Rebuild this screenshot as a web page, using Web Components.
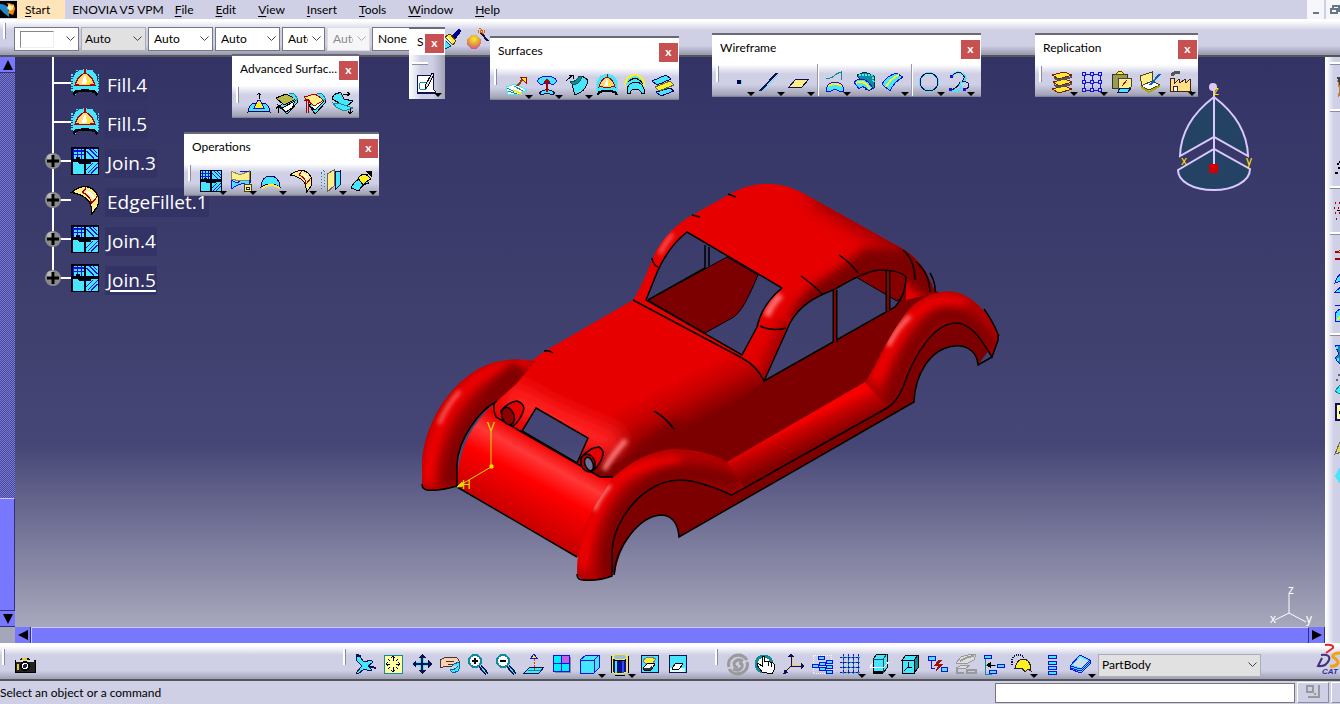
<!DOCTYPE html>
<html lang="en">
<head>
<meta charset="utf-8">
<title>Part Design</title>
<style>
html,body{margin:0;height:100%;overflow:hidden}
body{font:12px/16px Lato,"Open Sans",sans-serif;color:#000;background:#cfcfe6}
</style>
</head>
<body>
<cad-app></cad-app>
<script>
const RESET = '*{box-sizing:border-box}button,select,input{font:inherit;color:inherit;margin:0;border-radius:0}';
function define(name, css, html, init) {
  customElements.define(name, class extends HTMLElement {
    constructor() { super(); this.attachShadow({ mode: 'open' }); }
    connectedCallback() {
      if (this.shadowRoot.childNodes.length) return;
      const t = document.createElement('template');
      t.innerHTML = '<style>' + RESET + css + '</style>' + (typeof html === 'function' ? html(this) : html);
      this.shadowRoot.append(t.content.cloneNode(true));
      if (init) init(this);
    }
  });
}

/* icon drawings, all on a 24 unit square */
const C = '#46e6ff', Y = '#ffee88', N = '#101050', B = '#1010e0', T = '#108c98';
const box = (x, y, w, h, c) => `<rect x="${x}" y="${y}" width="${w || 6}" height="${h || 3}" fill="${C}" stroke="${c || B}"/>`;
const fill = `<path d="M2 21V10Q3 2 11 1h2q9 1 9 9v11l-3-1Q12 17 5 20l-1 3z" fill="${C}"/><path d="M1.500 5v13M22.500 5v13M5 2h14" stroke="${C}" stroke-dasharray="1 1" fill="none"/><path d="M4 14Q6 6 12 4q6 2 8 10-3-1-4 0H8q-2-1-4 0z" fill="#ffd878" stroke="#a00"/><path d="M9 13l3-8 2 8z" fill="#fff"/><path d="M14 7l2 6h-3z" fill="#fe0"/><path d="M12 1v3" stroke="#a00"/><path d="M3 22l1-3Q12 17 20 19l2 3" fill="none" stroke="#000" stroke-width="2"/>`;
const ICONS = {
  fill,
  join: `<path d="M1 1h22v22H1z" fill="#001"/><path d="M2 2h9v8H8V9H5v1H2zM13 2h9v8h-9zM2 13h4l1 1h4v8H2zM13 14h4v-1h5v9h-9z" fill="${C}"/><path d="M3 2v8M6 2v7M9 2v8M2 4h9M2 7h9M15 2l7 7M18 2l4 4M13 4l6 6M14 22l8-8M17 22l5-5M13 19l5-5" stroke="${B}" fill="none"/>`,
  fillet: `<path d="M1 6Q6 2 12 1q7 1 10 7 2 4 0 9l-5 7q1-7-2-11-5-6-14-7z" fill="${Y}" stroke="#000"/><path d="M13 2l-3 4q7 3 7 9l5-6" stroke="#a00" fill="none"/><path d="M13 5q5 2 6 6" stroke="#fff" stroke-width="2" fill="none"/>`,
  bump: `<path d="M1 21q1-8 7-9h8q6 1 7 9l-6-1H7z" fill="${C}" stroke="#006"/><path d="M7 17l4-8h2l4 8z" fill="#fe2" stroke="${B}"/><path d="M12 8V2M10 4l2-2 2 2" stroke="#000" fill="none"/>`,
  wrap: `<path d="M9 12l13-5 1 4-11 12-8-8z" fill="${C}" stroke="#000"/><path d="M2 13l5 4 13-7-3 7-6 4z" fill="#fff" stroke="#000"/><path d="M1 7l10-4 10 5-12 6z" fill="#b8b84a" stroke="#000"/><path d="M14 3q4-2 5 0l4 5-2 1" fill="${C}" stroke="${T}"/><path d="M3 15v7M1 18l2-3 3 3" stroke="#000" fill="none"/>`,
  wrap2: `<path d="M9 12l13-5 1 4-11 12-6-9z" fill="${C}" stroke="#000"/><path d="M8 16l4 3 9-9" fill="#fff" stroke="#000"/><path d="M1 6l11-3 9 6-10 6z" fill="${Y}" stroke="#a00"/><path d="M14 3q4-2 5 0l4 5-2 1" fill="${C}" stroke="${T}"/><path d="M3 9v13M5 9v13M1 10l3-2 3 2" stroke="#a00" fill="none"/>`,
  shape: `<path d="M1 8q2-7 9-6l3 6 9 2-6 5-6-2z" fill="${C}" stroke="#000"/><path d="M2 12l8 1 12 4-9 3-8-4z" fill="${C}" stroke="${T}"/><path d="M12 3h7M16 1l3 2-3 2M19 17v6M17 20l2 3 3-3" stroke="#000" fill="none"/>`,
  trimc: `<path d="M2 11l6 3 6-4 6 1v6l-6-3-7 3-5 3z" fill="${C}" stroke="${B}"/><path d="M2 2l9 4 9-4v9l-9 1-9-2z" fill="${Y}" stroke="#886"/><path d="M11 3l9-1" stroke="${B}"/><rect x="15" y="15" width="7" height="7" fill="${Y}" stroke="#442"/><path d="M21 2v12M17 18h3v2h-3z" stroke="#222" fill="#fff"/>`,
  arc: `<path d="M2 18Q3 7 11 7q9 0 10 11-4-3-9-3t-10 3z" fill="${C}" stroke="#006"/><path d="M3 19q9-6 18 0" stroke="#fe2" stroke-width="2" fill="none"/>`,
  translate: `<path d="M16 3l5-1v14l-5 5z" fill="${C}" stroke="${N}"/><path d="M8 5l7-4v16l-7 6z" fill="${Y}" stroke="#665"/><path d="M2 4v16M5 2v17M2 4l4-3" stroke="${T}" stroke-dasharray="1 2" fill="none"/>`,
  extrap: `<path d="M2 19Q6 10 14 9l6 5q-7 1-10 8z" fill="${C}" stroke="#000"/><path d="M9 9q3-4 8-4l5 5q-5 2-8 6z" fill="#fe2" stroke="#000"/><path d="M17 7l5-5M17 2h5v5z" stroke="#000"/>`,
  extrude: `<path d="M1 14l9-3 12 6-9 4-10 1z" fill="#fff" stroke="${C}"/><path d="M2 15l8 4M3 18l9 3M9 13l9 5" stroke="${T}"/><path d="M8 17l9 4" stroke="#fe2" stroke-width="2"/><path d="M12 13l7-8" stroke="#840" stroke-width="2"/><path d="M15 4h6v6z" fill="#fe2" stroke="#a00"/>`,
  revolve: `<path d="M2 8Q5 3 12 3t10 5l-4 4q-6-4-12 0z" fill="${C}" stroke="${B}"/><path d="M4 20q8-7 16 0l-3 2q-5-3-10 0z" fill="${C}" stroke="${N}"/><path d="M12 7v12M9 10l3-3 3 3" stroke="#a00" stroke-width="2" fill="#fe2"/>`,
  offset: `<path d="M7 12q8-2 10-9l6 4q-1 8-7 12l-6 3z" fill="${C}" stroke="#000"/><path d="M5 9q7 0 9-6l3 1q-2 7-9 8z" fill="${T}" stroke="#055"/><path d="M1 8l7-6M4 2h4v4" stroke="#000" fill="none"/>`,
  loft: `<path d="M2 12Q3 3 12 2q9 1 9 11" fill="${C}" stroke="#fe2" stroke-width="2"/><path d="M4 15q3-6 9-6 7 0 9 11l-3 1q-2-5-7-5-4 0-5 5l-3-1z" fill="${C}" stroke="#000"/><path d="M5 9q8-8 15 2" stroke="#000" fill="none"/>`,
  blend: `<path d="M1 8l14-6 5 4-14 6zM5 19l14-4 4 3-13 5z" fill="${C}" stroke="#006"/><path d="M4 14l15-6 4 4-15 6z" fill="#fe2" stroke="#664"/>`,
  sketch: `<path d="M3 4h16v13l3 5H3z" fill="#fff" stroke="${N}"/><path d="M3 22h19" stroke="${N}" stroke-width="2"/><circle cx="9" cy="15" r="4" fill="none" stroke="${T}"/><path d="M11 15l7-13 2 1-6 12-3 3z" fill="#dde" stroke="#000"/>`,
  point: `<rect x="10" y="10" width="4" height="4" fill="#004"/><path d="M14 10v4" stroke="${C}"/>`,
  line: `<path d="M3 21L20 3" stroke="${N}" stroke-width="2"/><path d="M4 22L21 5" stroke="${C}"/>`,
  plane: `<path d="M2 17l7-8h13l-7 8z" fill="${Y}" stroke="${N}"/>`,
  project: `<path d="M3 20q2-8 9-8t9 8l-1 2-4-1q-4-3-8 0l-4 1z" fill="${C}" stroke="${B}"/><path d="M5 16q7-4 14 0" stroke="#fe2" stroke-width="2" fill="none"/><path d="M3 8q5 1 8-2t7-4v8" stroke="${T}" fill="none"/>`,
  intersect: `<path d="M4 5l8-3 9 4v12l-8 2z" fill="${T}" stroke="#033"/><path d="M6 5h13l2 8" fill="none" stroke="${C}" stroke-dasharray="2 1" stroke-width="2"/><path d="M1 12q7-6 14 0l5 6-4 3q-6-7-10-2z" fill="${C}" stroke="${B}"/><path d="M3 13q8-4 14 6" stroke="#fe2" stroke-width="2" fill="none"/>`,
  parallel: `<path d="M1 14Q6 6 15 3l7 4Q13 12 9 21z" fill="${C}" stroke="${B}"/><path d="M5 17Q9 9 18 5" stroke="#fe2" stroke-width="2" fill="none"/>`,
  circle: `<circle cx="12" cy="12" r="9" fill="none" stroke="${C}" stroke-width="2"/><circle cx="12" cy="12" r="9" fill="none" stroke="${N}"/>`,
  spline: `<path d="M5 6q4-5 9-3 8 4 2 9-4 0-3 3 2 3-1 5-4 2-8 0" fill="none" stroke="${C}" stroke-width="2"/><path d="M5 6q4-5 9-3 6 4 1 8M15 11q7 1 7 4t-5 5M13 12q-2 6-9 8" fill="none" stroke="${N}"/><path d="M3 5h3v3H3zM2 18h3v3H2zM16 18h3v3h-3z" fill="${B}"/>`,
  stack: `<path d="M2 5l12-3 8 3-13 4zM3 12l12-3 7 3-13 4zM2 19l12-3 8 3-13 4z" fill="#ffe83c" stroke="#720"/><path d="M4 8l5 2 13-3M4 15l5 2 13-3" stroke="#555" stroke-width="2" fill="none"/>`,
  pattern: `<path d="M4 4h16M4 12h16M4 20h16M4 4v16M12 4v16M20 4v16" stroke="${B}"/><g fill="#ccf" stroke="${B}"><circle cx="4" cy="4" r="2"/><circle cx="12" cy="4" r="2"/><circle cx="20" cy="4" r="2"/><circle cx="4" cy="12" r="2"/><circle cx="12" cy="12" r="2"/><circle cx="20" cy="12" r="2"/><circle cx="4" cy="20" r="2"/><circle cx="12" cy="20" r="2"/><circle cx="20" cy="20" r="2"/></g>`,
  paste: `<path d="M2 4h15v14H2z" fill="#9a9a50" stroke="#333"/><path d="M6 4q4-5 8 0z" fill="#fe2" stroke="#540"/><path d="M8 8h13v9l-8 5-5-3z" fill="${Y}" stroke="#444"/><path d="M12 16l5-6M8 20l12 1" stroke="#a00"/><path d="M10 18h11l-3 4H8z" fill="${C}" stroke="${N}"/>`,
  book: `<path d="M2 6l12-4v9L4 16z" fill="${Y}" stroke="#442"/><path d="M3 16l11-5 8 4-11 5z" fill="#fff" stroke="#442"/><path d="M3 17l8 5 11-6" stroke="#aa0" stroke-width="2" fill="none"/><path d="M12 15l10-11" stroke="#06c" stroke-width="2"/>`,
  factory: `<path d="M2 21V8h4v6l5-5 1 4 5-4 1 4 4-4 1 12z" fill="#ffe08a" stroke="#421"/><path d="M4 6q0-4 8-4" stroke="#555" stroke-width="3" fill="none"/><path d="M5 16h4v5H5z" fill="#fff" stroke="#421"/>`,
  brush: `<path d="M13 9l7-7 2 2-6 8z" fill="#00a" stroke="#006"/><path d="M6 10l5-3 6 7-3 4z" fill="#ffe83c" stroke="#540"/><path d="M5 11l7 8-6 3-4-5z" fill="${C}" stroke="#046"/><path d="M6 12l5 5M8 10l5 6" stroke="#fff"/>`,
  ball: `<defs><radialGradient id="b" cx=".5" cy=".3" r=".8"><stop offset="0" stop-color="#ffe83c"/><stop offset=".5" stop-color="#e0a030"/><stop offset="1" stop-color="#d030d0"/></radialGradient></defs><circle cx="8" cy="15" r="7" fill="url(#b)"/><path d="M15 6l7 8" stroke="${N}" stroke-width="2"/><path d="M12 4h8M14 1l3 6" stroke="#d60" stroke-dasharray="1 1" stroke-width="3"/>`,
  plane3: `<path d="M2 4l4 1 4 5 7-2 2 2-5 4 4 4-2 1-6-2-6 5-2-1 6-7-6-6z" fill="${C}" stroke="${N}"/><path d="M14 14l8 2M2 3l5 1" stroke="${N}" stroke-width="2"/>`,
  fitall: `<rect x="2" y="3" width="18" height="18" fill="#ffffa0" stroke="${T}"/><path d="M11 9V5M9 6l2-2 2 2M11 15v4M9 18l2 2 2-2M8 12H4M6 10l-2 2 2 2M14 12h4M16 10l2 2-2 2M8 9L6 7M14 9l2-2M8 15l-2 2M14 15l2 2" stroke="#000" fill="none"/>`,
  pan: `<path d="M12 3v18M3 12h18" stroke="${C}" stroke-width="4"/><path d="M12 3v18M3 12h18" stroke="${N}" stroke-width="2"/><path d="M12 2l4 4H8zM12 22l4-4H8zM2 12l4-4v8zM22 12l-4-4v8z" fill="${N}"/>`,
  rotate: `<path d="M2 8l6-3h9q5 2 4 6l-5 1-3 3-5-1-6 2z" fill="#fdd0b0" stroke="#433"/><path d="M8 9h8M10 12h6" stroke="#433"/><path d="M14 14q3-4 7-3 2 4-1 8l-5 2-3-3q5 0 8-4" fill="${C}" stroke="#06a"/>`,
  zoomin: `<path d="M14 14l7 8" stroke="${N}" stroke-width="4"/><path d="M14 14l7 8" stroke="${C}"/><circle cx="9" cy="9" r="6" fill="#fff" stroke="${T}" stroke-width="2"/><path d="M6 9h6M9 6v6" stroke="#000" stroke-width="2"/>`,
  zoomout: `<path d="M14 14l7 8" stroke="${N}" stroke-width="4"/><path d="M14 14l7 8" stroke="${C}"/><circle cx="9" cy="9" r="6" fill="#fff" stroke="${T}" stroke-width="2"/><path d="M6 9h6" stroke="#000" stroke-width="2"/>`,
  normal: `<path d="M2 21l6-6h14l-5 6z" fill="${C}" stroke="${N}"/><path d="M6 18h13" stroke="${T}"/><path d="M12 18V4" stroke="#c40" stroke-dasharray="2 1"/><path d="M9 6l3-4 3 4z" fill="#fe2" stroke="${B}"/>`,
  multi: `<path d="M5 5h16v16H5z" fill="#889"/><path d="M3 3h16v16H3z" fill="#00f0ff"/><path d="M11 3h8v8h-8z" fill="#c060e0"/><path d="M3 3h16v16H3zM11 3v16M3 11h16" stroke="${B}" fill="none"/>`,
  cube: `<path d="M2 8l6-5h13v13l-5 5H2z" fill="${C}" stroke="${B}"/><path d="M2 8h14v13M16 8l5-5" fill="none" stroke="${B}"/>`,
  cyl: `<path d="M5 4v17h13V4z" fill="#10108c"/><path d="M7 7v14h2V7z" fill="${C}"/><path d="M14 8h2v13h-2z" fill="#3048ff"/><path d="M4 5v15q7 4 15 0V5" fill="none" stroke="#fe2"/><ellipse cx="12" cy="5" rx="7" ry="3" fill="#9be" stroke="#fe2"/><path d="M3 4v17M20 4v17M6 8q6 2 12 0M7 23h10" stroke="#000" fill="none"/>`,
  hide: `<path d="M3 3h17v17H3z" fill="${C}" stroke="${N}"/><path d="M5 9q2-4 8-4l5 2-3 4-7 1z" fill="#ffe83c" stroke="#777"/><path d="M5 16l5-5 7 1-4 6-6 1z" fill="#fff" stroke="#000"/><path d="M6 17h6l2-2" stroke="#333" stroke-width="2" fill="none"/>`,
  swap: `<path d="M3 3h17v17H3z" fill="${C}" stroke="${N}"/><path d="M4 16h15v4H4z" fill="#dff"/><path d="M6 16l4-5 7 1-4 5-6 1z" fill="#fff" stroke="#000"/>`,
  swirl: `<g fill="none" stroke="#9a9a9a" stroke-width="3" shape-rendering="auto"><path d="M21 8Q16 1 8 4 1 8 3 15"/><path d="M3 17q5 7 13 4 7-4 5-11"/><path d="M17 9q-6-3-9 2 0 5 4 4"/><path d="M7 17q6 3 9-2 1-4-3-4"/></g>`,
  hand: `<circle cx="10" cy="12" r="8" fill="#ffe" stroke="${T}" stroke-width="3"/><path d="M8 20l-5-7 1-2 4 3V5l2-1 1 6 3-1 2 1 3 1 2 2-1 5-2 4z" fill="#fff" stroke="#000"/><path d="M14 10v4M17 11v4" stroke="#000"/>`,
  axis: `<path d="M9 3v11h12M9 14l-6 6" fill="none" stroke="${N}"/><path d="M10 5v8h9M9 15l-4 4" fill="none" stroke="#ec6"/><path d="M9 1l3 4H6zM23 14l-4-3v6zM1 22l5-1-3-4z" fill="${N}"/>`,
  tree1: `<path d="M3 3h18v18H3z" fill="none" stroke="#fff" stroke-dasharray="1 1"/>${box(8,4)}${box(2,12)}${box(9,10)}${box(9,15)}${box(16,8)}${box(16,13)}${box(16,18)}`,
  grid: `<path d="M5 2v20M10 2v20M15 2v20M20 2v20M2 5h20M2 10h20M2 15h20M2 20h20" stroke="${T}"/><path d="M5 2v20M10 2v20M15 2v20M20 2v20M2 5h20M2 10h20M2 15h20M2 20h20" stroke="${B}" stroke-dasharray="2 2"/>`,
  cut: `<path d="M5 7l4-5h10v14l-4 5H5z" fill="${C}" stroke="#000"/><path d="M5 7h10l4-5M15 7v14" stroke="#055" fill="none"/><path d="M2 15h14l5-5h-3M2 15l3-4" fill="none" stroke="#fff"/><path d="M5 20h10" stroke="#000" stroke-width="2"/>`,
  box3: `<path d="M4 8l4-5h12v13l-4 5H4z" fill="${T}" stroke="#000"/><path d="M4 8h12v13H4z" fill="${C}" stroke="#000"/><path d="M4 8l4-5h12l-4 5z" fill="${C}" stroke="#000"/><path d="M6 19l4-4h4M10 15v-5" stroke="#000" fill="none"/>`,
  bolt: `${box(2,4,7,4)}<path d="M5 8v8h4" fill="none" stroke="${B}"/><path d="M12 8l-4 6h4l-3 7 8-9h-4l3-4z" fill="#a01010"/>${box(15,15,6,4)}`,
  rocks: `<path d="M2 11l5-6 10-3h5l-2 6-8 4zM2 16l6-3h8l-5 4z" fill="#ddd" stroke="#999"/><path d="M6 9l8-4 6-1M3 17v4h7M13 18h9v3h-9z" fill="none" stroke="#999" stroke-width="2"/>`,
  tree2: `<path d="M3 7v15h7M3 13h11" fill="none" stroke="${T}"/>${box(2,3,7,3)}<path d="M5 13h8M5 13l3-2v4z" stroke="#000"/>${box(15,12,7,3)}${box(7,18,7,3)}`,
  search: `<path d="M2 10q0-7 8-7l5 3M2 10v4" stroke="${N}" stroke-dasharray="1 1" stroke-width="2" fill="none"/><path d="M5 16Q7 8 12 7q9 0 9 12l-3-2-3 3q-2-4-6-4z" fill="#fe2" stroke="#222"/>`,
  bars: `${box(8,3,8,3)}${box(8,9,8,3)}${box(8,14,8,3)}${box(8,19,8,3)}`,
  rubber: `<path d="M2 14L12 3l10 5v4L13 21 2 17z" fill="${C}" stroke="${B}"/><path d="M4 13L12 5l8 4-7 7z" fill="#cde"/><path d="M2 14l11 3L22 8M2 16l11 3 9-9" fill="none" stroke="${B}"/>`,
  camera: `<path d="M2 8h5l2-2h6l2 2h5v12H2z" fill="#222" stroke="#000"/><path d="M3 8h18v2H3z" fill="#ddd"/><path d="M9 6h5v2H9zM4 12h2v6H4z" fill="#ec2"/><circle cx="12" cy="14" r="4" fill="#fff" stroke="#000" stroke-width="2"/><circle cx="12" cy="14" r="2" fill="#224"/>`,
  a1: `<path d="M3 5h21v10H10l-6 8 1-9z" fill="#c08040"/><path d="M3 2h21v12H7z" fill="#444"/>`,
  a2: `<path d="M3 7h2v2H3zM5 5h3v2H5zM4 11h3v2H4zM1 16h3v2H1z" fill="#000"/>`,
  a3: `<path d="M1 4h23M0 9h24M1 14h23M2 20h22" stroke="#a00" stroke-dasharray="1 3" stroke-width="2"/><path d="M3 11h16" stroke="#000"/>`,
  a4: `<path d="M1 8l22-5v8zM1 15l22-4v8z" fill="#fe6" stroke="#a00"/>`,
  a5: `<path d="M1 13q2-8 8-10h14v7q-14 0-22 3zM1 22l7-6h16v6z" fill="${C}" stroke="${B}"/>`,
  a6: `<path d="M1 4h23M1 20v-6q2-6 7-6h16v12z" fill="${C}" stroke="${B}"/><path d="M3 19L14 9" stroke="#fe2" stroke-width="2"/>`,
  a7: `<path d="M1 4h10l13-2v20H5l-4-5 4-4z" fill="${T}" stroke="${B}"/><path d="M2 6h20M3 18h20" stroke="${C}" stroke-dasharray="2 2" stroke-width="3"/>`,
  a8: `<path d="M4 3h2v2H4zM2 8h2v2H2z" fill="#666"/><path d="M1 20l5-6h18v8H4z" fill="${C}" stroke="${T}"/>`,
  a9: `<path d="M2 4h22v16H2z" fill="#ffffa0" stroke="${N}" stroke-width="2"/><path d="M5 11h10v3H5z" fill="#000"/>`,
  a10: `<path d="M1 21l4-10 3-6h13v14H8z" fill="#dd5" stroke="#666"/>`,
  a11: `<path d="M1 16l4-8 4-2h13v17H5z" fill="${C}"/>`
};
define('cad-icon', ':host{display:block;width:24px;height:24px}svg{display:block;width:100%;height:100%}', el =>
  `<svg viewBox="0 0 24 24" shape-rendering="crispEdges" aria-hidden="true">${ICONS[el.getAttribute('name')]}</svg>`);

define('cad-tool', `:host{display:block;flex:none}
button{display:grid;width:28px;height:28px;padding:0 0 0 2px;border:0;background:none;align-items:start}
:host([menu]) button{width:30px}
cad-icon,i{grid-area:1/1}
cad-icon{margin-top:2px}
i{align-self:end;justify-self:end;width:0;height:0;border:4px solid transparent;border-top-color:#000;border-bottom:0}`,
  el => `<button aria-label="${el.getAttribute('name')}"><cad-icon name="${el.getAttribute('name')}"></cad-icon>${el.hasAttribute('menu') ? '<i></i>' : ''}</button>`);

define('cad-grip', ':host{display:block;flex:none;width:3px;height:16px;background:#fff;border-right:1px solid #8c8ca0}', '');
define('cad-sep', ':host{display:block;flex:none;width:2px;height:32px;margin:0 2px;background:#fff;border-left:1px solid #9a9aac}', '');

define('cad-window', `:host{display:flex;flex-direction:column;position:absolute;height:64px;border-top:2px solid #6a6a76;background:#fff}
header{display:flex;align-items:center;height:26px;padding:0 1px 0 8px;flex:none}
h2{font:inherit;flex:1;margin:0;white-space:nowrap}
header button{width:19px;height:19px;padding:0 0 2px;border:0;background:#c75050;color:#fff;font-weight:700;font-size:12px;line-height:14px;margin-top:3px;flex:none}
.bar{flex:1;display:flex;align-items:end;padding:0 0 1px 4px;background:linear-gradient(#fff 10%,#cfcfe6 36%,#cfcfe6 65%,#a2a2b6 95%,#77778a)}
cad-grip{align-self:start;margin-top:5px;margin-right:6px}
:host([tall]){height:72px}
:host([tall]) .bar{flex-direction:column;align-items:center;padding:7px 0 0;background:linear-gradient(90deg,#fff 0,#cfcfe6 35%,#cfcfe6 65%,#a2a2b6)}
:host([tall]) cad-grip{width:16px;height:3px;align-self:start;margin:0 0 4px 3px;border:0;border-bottom:1px solid #8c8ca0}`,
  el => `<header><h2>${el.getAttribute('heading')}</h2><button aria-label="Close">x</button></header><div class="bar"><cad-grip></cad-grip><slot></slot></div>`);

define('cad-select', `:host{display:grid;flex:none;height:24px}
select{grid-area:1/1;width:100%;min-width:0;height:100%;appearance:none;border:1px solid #767686;background:#fff;padding:0 16px 1px 5px;outline:0;text-overflow:clip}
svg{grid-area:1/1;justify-self:end;align-self:center;width:9px;height:6px;margin-right:4px;pointer-events:none}
:host([gray]) select{background:#e1e1e1;border-color:#adadb4}
:host([gray]) select{padding-left:3px}
:host([off]) select{color:#8a8a8a;background:#f6f6f8;border-color:#ddd;opacity:1}
:host([off]) svg{opacity:.4}
i{grid-area:1/1;width:34px;height:17px;margin-left:6px;align-self:center;border:1px solid #888;border-right-color:#eee;border-bottom-color:#eee;pointer-events:none}`,
  el => `<select aria-label="${el.getAttribute('label')}"${el.hasAttribute('off') ? ' disabled' : ''}><option>${el.getAttribute('value') || ''}</option></select>${el.hasAttribute('swatch') ? '<i></i>' : ''}<svg viewBox="0 0 9 6"><path d="M0.500 0.500l4 4 4-4" fill="none" stroke="#444"/></svg>`);

define('cad-menubar', `:host{display:flex;align-items:stretch;height:19px;overflow:hidden}
.logo{width:17px;flex:none}
nav{display:flex}
nav button{border:0;background:none;padding:0 11px;white-space:nowrap}
nav .on{background:#ffe4b8;padding:0 15px 0 8px}
nav .vpm{padding:0 0 0 7px}
u{text-underline-offset:2px}
.win{margin-left:auto;display:flex;gap:2px;margin-right:-3px}
.win button{width:17px;padding:0;border:0;background:#f7f7fb;display:grid;place-items:center}`,
`<svg class="logo" viewBox="0 0 17 19"><path d="M0 1h17v17H0z" fill="#000"/><path d="M0 4q6 0 8 4t1 9Q3 13 0 9z" fill="#28c"/><path d="M7 3q8 0 8 6l-2 6-5-2 2-4z" fill="#f80"/><path d="M9 4l3 2 2-2-1 5-3 2-3-3z" fill="#fff0b0"/></svg>
<nav><button class="on"><u>S</u>tart</button><button class="vpm">ENOVIA V5 VPM</button><button><u>F</u>ile</button><button><u>E</u>dit</button><button><u>V</u>iew</button><button><u>I</u>nsert</button><button><u>T</u>ools</button><button><u>W</u>indow</button><button><u>H</u>elp</button></nav>
<div class="win"><button aria-label="Minimize"><svg width="10" height="10"><path d="M2 8h6" stroke="#667788" stroke-width="2"/></svg></button><button aria-label="Restore"><svg width="10" height="10"><path d="M3 4V1h6v5H7M1 4h6v4H1z" fill="none" stroke="#667788" stroke-width="2"/></svg></button></div>`);

define('cad-props', `:host{display:flex;align-items:center;height:38px;gap:2px;padding:2px 0 0 3px;overflow:hidden;background:linear-gradient(#fff 0,#fff 5%,#cfcfe6 30%,#cfcfe6 70%,#a2a2b6 90%,#9a9aae 94%,#55555c 95%,#55555c)}
cad-grip{align-self:start;margin:2px 6px 0 0}
cad-tool{margin-left:-3px}`,
`<cad-grip></cad-grip>
<cad-select label="Fill color" swatch style="width:65px"></cad-select>
<cad-select label="Transparency" value="Auto" gray style="width:65px"></cad-select>
<cad-select label="Line width" value="Auto" style="width:65px"></cad-select>
<cad-select label="Line type" value="Auto" style="width:65px"></cad-select>
<cad-select label="Point type" value="Auto" style="width:43px"></cad-select>
<cad-select label="Rendering" value="Auto" off style="width:43px"></cad-select>
<cad-select label="Layer" value="None" style="width:66px"></cad-select>
<cad-tool name="brush"></cad-tool><cad-tool name="ball"></cad-tool>`);

define('cad-scroll', `:host{display:flex;background:#7878ff;min-width:0;min-height:0}
:host([vertical]){flex-direction:column}
button{flex:none;width:16px;height:16px;padding:0;border:0;border-right:1px solid #303080;background:#7878ff;display:grid;place-items:center}
:host([vertical]) button{width:15px;border:0;border-bottom:1px solid #303080}
.track{background:repeating-conic-gradient(#7878dc 0 25%,#484890 0 50%) 0 0/2px 2px}
.thumb{background:#7878ff;border-top:1px solid #c8c8ff;border-right:1px solid #303080;border-left:1px solid #c8c8ff}
:host([vertical]) .thumb{border-left:0;border-bottom:1px solid #303080}`,
  el => {
    const v = el.hasAttribute('vertical');
    const tri = d => `<svg width="12" height="12"><path d="${d}" fill="#000"/></svg>`;
    return `<button aria-label="Back">${tri(v ? 'M1 11L6 1l5 10z' : 'M11 1v10L1 6z')}</button>
<div class="track" style="flex:${el.getAttribute('before')}"></div><div class="thumb" style="flex:${el.getAttribute('size')}"></div>
<button aria-label="Forward">${tri(v ? 'M1 1h10L6 11z' : 'M1 1v10l10-5z')}</button>`;
  });

define('cad-node', `:host{display:grid;grid-template-columns:53px 17px 31px auto;align-items:center;justify-content:start;height:39px;color:#fff}
.stem{grid-area:1/1;align-self:stretch;margin-left:37px;width:2px;background:#fff}
:host([last]) .stem{align-self:start;height:18px}
.h{grid-column:1/3;grid-row:1;margin:-3px 0 0 38px;height:2px;width:18px;background:#fff}
.p{grid-column:1/3;grid-row:1;margin:-3px 0 0 29px;width:18px;height:18px}
cad-icon{grid-column:3;grid-row:1;width:30px;height:30px;margin:-4px 0 0 -15px}
a{grid-column:4;grid-row:1;margin-left:-11px;padding:0 1px 0 2px;height:29px;font:19px/29px "Open Sans","Noto Sans",sans-serif;color:#fff;text-decoration:none;background:#333366;border-radius:2px;white-space:nowrap;margin-top:2px}
:host([last]) a{text-decoration:underline;text-decoration-thickness:2px;text-underline-offset:3px}`,
  el => `<span class="stem"></span><span class="h"></span>${el.hasAttribute('open') ? '' : '<svg class="p" viewBox="0 0 18 18"><circle cx="9" cy="9" r="8" fill="#8a8a8a"/><circle cx="7" cy="6" r="4" fill="#b8b8b8"/><path d="M9 3v12M3 9h12" stroke="#000" stroke-width="3"/></svg>'}<cad-icon name="${el.getAttribute('icon')}"></cad-icon><a href="#"><slot></slot></a>`);

define('cad-car', ':host{display:block;min-width:0;min-height:0}svg{display:block;width:100%;height:100%}text{font:12px "Liberation Sans",sans-serif}', `
<svg viewBox="15 57 1310 570" role="img" aria-label="Car body">
<defs>
<filter id="f2" x="-50%" y="-50%" width="200%" height="200%"><feGaussianBlur stdDeviation="2"/></filter>
<filter id="f5" x="-50%" y="-50%" width="200%" height="200%"><feGaussianBlur stdDeviation="5"/></filter>
<filter id="f9" x="-50%" y="-50%" width="200%" height="200%"><feGaussianBlur stdDeviation="9"/></filter>
<linearGradient id="hood" gradientUnits="userSpaceOnUse" x1="698" y1="368" x2="720" y2="412"><stop offset="0" stop-color="#e60000"/><stop offset=".4" stop-color="#c80000"/><stop offset="1" stop-color="#7d0000"/></linearGradient>
<linearGradient id="front" gradientUnits="userSpaceOnUse" x1="550" y1="446" x2="508" y2="522"><stop offset="0" stop-color="#f00000"/><stop offset=".2" stop-color="#ff3838"/><stop offset=".45" stop-color="#ff0000"/><stop offset=".8" stop-color="#d80000"/><stop offset="1" stop-color="#c00000"/></linearGradient>
<linearGradient id="board" gradientUnits="userSpaceOnUse" x1="796" y1="423" x2="809" y2="450"><stop offset="0" stop-color="#f80000"/><stop offset=".35" stop-color="#c40000"/><stop offset="1" stop-color="#800000"/></linearGradient>
<linearGradient id="pillar" gradientUnits="userSpaceOnUse" x1="757" y1="330" x2="784" y2="342"><stop offset="0" stop-color="#e80000"/><stop offset=".4" stop-color="#e00000"/><stop offset="1" stop-color="#900000"/></linearGradient>
<path id="fl" d="M422 486V463C424 420 455 375 492 363Q512 357 536 361L515 385 497 401C480 410 458 438 457 465V486Q440 492 425 490Z"/>
<path id="fr" d="M577 575C577 540 586 515 613 478Q640 452 673 449 705 449 727 462L745 488 732 495C722 491 700 480 680 480 645 480 613 518 612 553V576Q595 582 582 580Z"/>
<path id="rr" d="M865 382C877 365 886 340 903 317 920 294 940 290 955 292 975 296 992 318 998 334V340L992 357C980 337 970 323 956 323 935 323 915 352 903 387Q897 402 887 408Z"/>
<path id="hd" d="M495 402Q510 375 545 351L633 300 742 358Q757 366 764 381L705 428 650 460 613 477H600L522 432 496 417 492 410Z"/>
<path id="rf" d="M633 300Q641 288 652 260 662 235 687 218L730 194Q770 172 810 197L903 249Q925 262 935 293L906 300V277C898 270 880 270 873 271 855 276 845 284 833 290 815 296 800 305 790 323L764 381Q757 366 742 358L633 300Z"/>
<clipPath id="cfl"><use href="#fl"/></clipPath><clipPath id="cfr"><use href="#fr"/></clipPath><clipPath id="crr"><use href="#rr"/></clipPath><clipPath id="chd"><use href="#hd"/></clipPath><clipPath id="crf"><use href="#rf"/></clipPath>
<mask id="holes" maskUnits="userSpaceOnUse" x="400" y="160" width="620" height="440"><path d="M400 160h620v440H400z" fill="#fff"/>
<path d="M646 300L658 270Q670 245 687 232L782 288Q762 304 757 327L742 355ZM764 381L790 323C800 305 815 297 833 290 845 284 855 276 873 271 882 269 900 270 906 277Q906 295 895 307L887 312ZM536 408L588 438 577 463 522 431Z" fill="#000"/></mask>
</defs>
<path d="M648 300L727 257 758 275Q752 290 745 303 738 315 732 318L705 333Z" fill="#7d0000" stroke="#000"/>
<path d="M856 277L897 301 910 290V265H870Z" fill="#860000" stroke="#000"/>
<g mask="url(#holes)">
<path d="M613 478L760 350 830 300 905 270 940 293 1000 335 978 365C977 350 965 345 955 346 930 348 915 375 914 402L679 537C678 523 672 515 660 515 640 517 618 545 615 575L600 560Z" fill="#7d0000"/>
<path d="M497 401Q457 435 457 486L577 557 600 540 625 478 600 477 522 432Z" fill="url(#front)"/>
<use href="#hd" fill="url(#hood)"/>
<g clip-path="url(#chd)"><path d="M505 392Q550 420 620 446" stroke="#ff2020" stroke-width="28" fill="none" filter="url(#f9)"/><path d="M604 470Q610 458 626 440" stroke="#ff8080" stroke-width="5" fill="none" filter="url(#f2)"/><path d="M630 476Q650 445 680 425" stroke="#7d0000" stroke-width="16" fill="none" filter="url(#f5)"/></g>
<use href="#rf" fill="#e60000"/>
<g clip-path="url(#crf)"><path d="M815 192L905 246 945 300" stroke="#8a0000" stroke-width="20" fill="none" filter="url(#f9)"/><path d="M800 325Q812 300 835 288L870 262 905 264 940 290" stroke="#7d0000" stroke-width="28" fill="none" filter="url(#f5)"/>
<path d="M742 358L757 327 764 310 790 323 764 384Z" fill="url(#pillar)" filter="url(#f2)"/><path d="M767 316Q771 304 781 295" stroke="#ff7070" stroke-width="7" fill="none" filter="url(#f2)"/><path d="M660 254Q664 244 673 234" stroke="#ff5a5a" stroke-width="4" fill="none" filter="url(#f2)"/></g>
</g>
<path d="M727 462L865 382 903 387Q897 402 887 408L732 495Z" fill="url(#board)"/>
<use href="#fl" fill="#b00000"/>
<g clip-path="url(#cfl)"><path d="M428 484Q431 415 478 378 500 364 530 362" stroke="#f40000" stroke-width="13" fill="none" filter="url(#f5)"/><path d="M453 486Q450 432 522 368" stroke="#800000" stroke-width="22" fill="none" filter="url(#f5)"/><path d="M439 424Q447 405 460 391" stroke="#ff7878" stroke-width="3" fill="none" filter="url(#f2)"/></g>
<use href="#fr" fill="#b00000"/>
<g clip-path="url(#cfr)"><path d="M583 570Q583 520 620 477 645 462 680 462" stroke="#f80000" stroke-width="12" fill="none" filter="url(#f5)"/><path d="M609 578Q606 505 665 476 700 468 740 486" stroke="#7d0000" stroke-width="18" fill="none" filter="url(#f5)"/><path d="M594 510Q600 496 610 485" stroke="#ff8c8c" stroke-width="4" fill="none" filter="url(#f2)"/></g>
<use href="#rr" fill="#b00000"/>
<g clip-path="url(#crr)"><path d="M875 383Q890 342 915 314 940 294 965 306" stroke="#f40000" stroke-width="13" fill="none" filter="url(#f5)"/><path d="M888 410Q908 345 938 318 965 305 992 350" stroke="#800000" stroke-width="16" fill="none" filter="url(#f5)"/><path d="M888 346Q897 328 910 316" stroke="#ff8080" stroke-width="4" fill="none" filter="url(#f2)"/></g>
<g fill="none" stroke="#000" stroke-width="1.500">
<path d="M422 484Q422 489 427 490 440 491 457 486V465C458 438 480 410 497 401M457 487L577 557M577 574Q577 580 583 580 600 581 612 576V553C613 518 645 480 680 480 700 480 722 491 732 495L887 408Q897 402 903 387C915 352 935 323 956 323 970 323 980 337 992 357L998 340V334Q992 320 984 309"/>
<path d="M992 357L978 365C977 350 965 345 955 346 930 348 915 375 914 402L679 537C678 523 672 515 660 515 640 517 616 545 614 575"/>
<path d="M495 402Q492 408 496 417L520 431 600 477H613M536 408L588 438 577 463 522 431ZM633 300L742 358Q757 366 764 381L790 323C800 305 815 297 833 290 845 284 855 276 873 271 882 269 900 270 906 277Q906 295 895 307L764 381M646 300L658 270Q670 245 687 232L782 288Q762 304 757 327L742 355ZM648 300L705 268"/>
<path d="M544 351q5-1 9 2M654 411q11 6 20 18M652 258q1 7 6 9M692 215l8 2M728 194l8 3M839 255q12 8 19 18M801 276q14 10 21 18M760 326q12 6 26 2M903 250q12 10 12 30M916 262q13 10 14 30M930 273q6 10 5 20"/>
<path d="M705 245v23M709 247v19" /><path d="M835 290v52" stroke="#000" stroke-width="5"/><path d="M835 290v52" stroke="#8a0000" stroke-width="2"/><path d="M888 271v40" stroke-width="5"/><path d="M888 271v40" stroke="#8a0000" stroke-width="2"/>
<path d="M501 411Q508 402 517 401 526 404 523 412 519 422 513 426 503 424 501 411Z" fill="#e80000"/><ellipse cx="508" cy="416" rx="6" ry="9" fill="#8c0000" transform="rotate(-20 508 416)"/>
<path d="M581 458Q590 447 599 447 605 450 602 458 598 468 592 471Z" fill="#e80000"/><ellipse cx="588" cy="463" rx="7" ry="9" fill="#a00" transform="rotate(-20 588 463)"/><ellipse cx="589" cy="464" rx="4" ry="7" fill="#6c6c94" transform="rotate(-20 589 464)"/>
</g>
<g stroke="#e0e000" fill="none"><path d="M491 430V467L457 487"/><path d="M490 465h3v3h-3zM457 487l5-5 1 4z" fill="#e0e000"/></g>
<text x="487" y="431" fill="#e0e000">V</text><text x="462" y="489" fill="#e0e000">H</text>
</svg>`);

define('cad-viewport', `:host{display:grid;grid-template:minmax(0,1fr)/minmax(0,1fr);overflow:hidden;background:linear-gradient(#333366 0,#3e3e6d 40%,#464676 68%,#77779a 84%,#a8a8bc)}
:host>*{grid-area:1/1}
ul{list-style:none;margin:0;padding:8px 0 0;justify-self:start;align-self:start;background:linear-gradient(#fff,#fff) 37px 0/2px 20px no-repeat}
.compass{justify-self:end;align-self:start;margin:20px 65px 0 0}
.triad{justify-self:end;align-self:end;margin-right:7px}
text{font:12px "Liberation Sans",sans-serif}`,
`<cad-car></cad-car>
<ul><li><cad-node icon="fill" open>Fill.4</cad-node></li><li><cad-node icon="fill" open>Fill.5</cad-node></li><li><cad-node icon="join">Join.3</cad-node></li><li><cad-node icon="fillet">EdgeFillet.1</cad-node></li><li><cad-node icon="join">Join.4</cad-node></li><li><cad-node icon="join" last>Join.5</cad-node></li></ul>
<svg class="compass" width="90" height="120" viewBox="1170 77 90 120"><g fill="#244264" stroke="#dcc8ff" stroke-width="2"><path d="M1214 97Q1181 122 1180 156L1214 137 1248 156Q1247 122 1214 97Z"/><path d="M1178 170L1214 149 1250 169C1250 182 1232 190 1214 190 1192 190 1178 181 1178 170Z"/><path d="M1214 88V165"/></g><circle cx="1213" cy="87" r="4" fill="#dcc8ff"/><path d="M1209 164h9v9h-9z" fill="#d00000"/><g fill="#ffe800"><text x="1213" y="95">z</text><text x="1181" y="165">x</text><text x="1246" y="165">y</text></g></svg>
<svg class="triad" width="52" height="44" viewBox="1266 583 52 44"><path d="M1289 594V613L1275 620M1289 613L1306 622" fill="none" stroke="#fff"/><g fill="#fff"><text x="1288" y="594">z</text><text x="1270" y="623">x</text><text x="1306" y="623">y</text></g></svg>`);

define('cad-dock', `:host{display:flex;flex-direction:column;overflow:hidden;border-left:1px solid #fff;background:linear-gradient(90deg,#fff,#cfcfe6 8px);padding:5px 0 0 4px}
hr{flex:none;align-self:stretch;height:3px;margin:0;border:0;background:#fff;border-bottom:1px solid #8c8ca0}
cad-icon{flex:none;margin-left:4px}`,
`<hr><cad-icon name="a1" style="margin-top:10px;margin-bottom:10px"></cad-icon><hr><cad-icon name="a2" style="margin-top:44px;margin-bottom:6px"></cad-icon><hr><cad-icon name="a3" style="margin-top:10px;margin-bottom:9px"></cad-icon><hr><cad-icon name="a4" style="margin-top:9px;margin-bottom:2px"></cad-icon><cad-icon name="a5"></cad-icon><cad-icon name="a6" style="margin-top:7px;margin-bottom:8px"></cad-icon><hr><cad-icon name="a7" style="margin-top:5px;margin-bottom:6px"></cad-icon><cad-icon name="a8" style="margin-bottom:5px"></cad-icon><cad-icon name="a9" style="margin-bottom:9px"></cad-icon><cad-icon name="a10" style="margin-bottom:3px"></cad-icon><cad-icon name="a11"></cad-icon>`);

define('cad-bottombar', `:host{display:grid;grid-template-columns:341px 372px minmax(0,1fr) auto;height:38px;overflow:hidden;background:linear-gradient(#fff 0,#fff 8%,#cfcfe6 32%,#cfcfe6 72%,#a2a2b6 94%,#55555c 95%,#55555c)}
section{display:flex;align-items:center;padding:4px 0 0 2px;min-width:0}
section cad-grip{align-self:start;margin:2px 6px 0 0}
cad-select{width:163px;margin:2px 0 0 2px;height:23px}
.ds{margin-right:-1px}`,
`<section><cad-grip></cad-grip><cad-tool name="camera"></cad-tool></section>
<section><cad-grip></cad-grip><cad-tool name="plane3"></cad-tool><cad-tool name="fitall"></cad-tool><cad-tool name="pan"></cad-tool><cad-tool name="rotate"></cad-tool><cad-tool name="zoomin"></cad-tool><cad-tool name="zoomout"></cad-tool><cad-tool name="normal"></cad-tool><cad-tool name="multi"></cad-tool><cad-tool name="cube" menu></cad-tool><cad-tool name="cyl" menu></cad-tool><cad-tool name="hide"></cad-tool><cad-tool name="swap"></cad-tool></section>
<section><cad-grip></cad-grip><cad-tool name="swirl"></cad-tool><cad-tool name="hand"></cad-tool><cad-tool name="axis"></cad-tool><cad-tool name="tree1"></cad-tool><cad-tool name="grid" menu></cad-tool><cad-tool name="cut" menu></cad-tool><cad-tool name="box3"></cad-tool><cad-tool name="bolt"></cad-tool><cad-tool name="rocks"></cad-tool><cad-tool name="tree2"></cad-tool><cad-tool name="search" menu></cad-tool><cad-tool name="bars"></cad-tool><cad-tool name="rubber" menu></cad-tool><cad-select label="In work object" value="PartBody" gray></cad-select></section>
<svg class="ds" width="25" height="36" viewBox="0 0 25 36"><path d="M9 2q9-1 8 3l-7 5" fill="none" stroke="#e02828" stroke-width="2"/><path d="M5 12q10-1 8 5-3 7-11 6l4-8" fill="none" stroke="#40307c" stroke-width="2"/><path d="M25 10q-9 0-8 4 5 3 5 6-2 4-8 3" fill="none" stroke="#f0a010" stroke-width="3"/><text x="6" y="31" fill="#30309c" style="font:italic 700 8px 'Liberation Sans',sans-serif">CAT</text></svg>`);

define('cad-status', `:host{display:flex;align-items:center;height:23px;overflow:hidden;gap:2px}
output{flex:1;white-space:nowrap}
input{width:300px;height:20px;border:1px solid #777;background:#fff}
button{flex:none;width:32px;height:21px;padding:0;border:1px solid #8c8ca0;border-top-color:#fff;border-left-color:#fff;background:#cfcfe6}
.half{margin-right:-23px}`,
`<output>Select an object or a command</output><input aria-label="Power input"><button aria-label="Dialog"><svg width="16" height="14"><path d="M2 2h6v6H2zM9 10h2M14 1v12H3" fill="none" stroke="#999" stroke-width="2"/></svg></button><button class="half" aria-label="Assistant"><svg width="16" height="14"><path d="M2 2h6v6H2zM3 13h8" fill="none" stroke="#999" stroke-width="2"/></svg></button>`);

define('cad-app', `:host{display:grid;position:relative;height:100vh;grid-template:19px 38px minmax(0,1fr) 16px 38px 23px/15px minmax(0,1fr) 15px;overflow:hidden;background:#cfcfe6}
cad-menubar,cad-props,cad-bottombar,cad-status{grid-column:1/-1}
.corner{background:#a6a6bb}
cad-dock{grid-column:3;grid-row:3/5}
cad-scroll[vertical]{grid-area:3/1}
cad-viewport{grid-area:3/2}`,
`<cad-menubar></cad-menubar><cad-props></cad-props>
<cad-scroll vertical before="427" size="111"></cad-scroll><cad-viewport></cad-viewport><cad-dock></cad-dock>
<div class="corner"></div><cad-scroll before="0" size="1"></cad-scroll>
<cad-bottombar></cad-bottombar><cad-status></cad-status>
<cad-window heading="Advanced Surfac..." style="left:232px;top:54px;width:127px"><cad-tool name="bump"></cad-tool><cad-tool name="wrap"></cad-tool><cad-tool name="wrap2"></cad-tool><cad-tool name="shape"></cad-tool></cad-window>
<cad-window heading="Operations" style="left:184px;top:132px;width:195px"><cad-tool name="join" menu></cad-tool><cad-tool name="trimc" menu></cad-tool><cad-tool name="arc" menu></cad-tool><cad-tool name="fillet" menu></cad-tool><cad-tool name="translate" menu></cad-tool><cad-tool name="extrap" menu></cad-tool></cad-window>
<cad-window heading="S" tall style="left:409px;top:27px;width:36px"><cad-tool name="sketch" menu></cad-tool></cad-window>
<cad-window heading="Surfaces" style="left:490px;top:36px;width:189px"><cad-tool name="extrude" menu></cad-tool><cad-tool name="revolve" menu></cad-tool><cad-tool name="offset" menu></cad-tool><cad-tool name="fill"></cad-tool><cad-tool name="loft"></cad-tool><cad-tool name="blend"></cad-tool></cad-window>
<cad-window heading="Wireframe" style="left:712px;top:33px;width:269px"><cad-tool name="point" menu></cad-tool><cad-tool name="line" menu></cad-tool><cad-tool name="plane" menu></cad-tool><cad-sep></cad-sep><cad-tool name="project" menu></cad-tool><cad-tool name="intersect"></cad-tool><cad-tool name="parallel" menu></cad-tool><cad-sep></cad-sep><cad-tool name="circle" menu></cad-tool><cad-tool name="spline" menu></cad-tool></cad-window>
<cad-window heading="Replication" style="left:1035px;top:33px;width:163px"><cad-tool name="stack" menu></cad-tool><cad-tool name="pattern" menu></cad-tool><cad-tool name="paste"></cad-tool><cad-tool name="book" menu></cad-tool><cad-tool name="factory" menu></cad-tool></cad-window>`);
</script>
</body>
</html>
